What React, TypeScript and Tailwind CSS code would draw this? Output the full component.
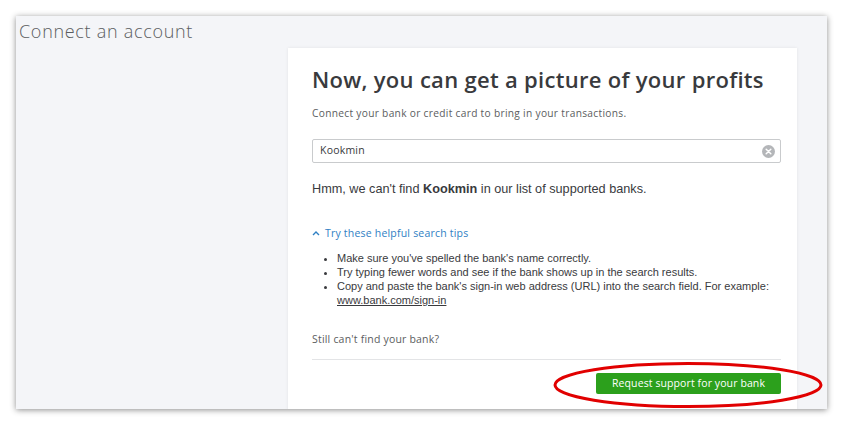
import React from 'react';

const tips = [
  "Make sure you've spelled the bank's name correctly.",
  'Try typing fewer words and see if the bank shows up in the search results.',
];

export default function App() {
  return (
    <div className="w-[842px] h-[426px] bg-white overflow-hidden pt-[16px] pl-[16px]">
      <div className="relative w-[811px] h-[393px] bg-[#f4f5f8] overflow-hidden shadow-[0_1px_6px_rgba(0,0,0,0.45)]">
        <div className="pl-[3px] pt-[3px] text-[18px] leading-[24px] text-[#5b5d60] font-['Open_Sans',sans-serif] font-light tracking-[0.7px]">
          Connect an account
        </div>

        <div className="ml-[272px] mt-[5px] w-[509px] h-[400px] bg-white shadow-[0_0_3px_rgba(0,0,0,0.08)] pl-[24px] pr-[16px] pt-[16px]">
          <h1 className="text-[22px] leading-[30px] font-semibold text-[#393a3d] font-['Open_Sans',sans-serif] tracking-[0.3px]">
            Now, you can get a picture of your profits
          </h1>
          <p className="mt-[12px] text-[10.2px] leading-[14px] text-[#5b5d60] font-['Open_Sans',sans-serif] tracking-[0.3px]">
            Connect your bank or credit card to bring in your transactions.
          </p>

          <div className="mt-[19px] h-[24px] border border-[#c9cbcd] rounded-[2px] flex items-center justify-between pl-[7px] pr-[5px]">
            <span className="text-[10.5px] text-[#393a3d] font-['Open_Sans',sans-serif] tracking-[0.2px]">Kookmin</span>
            <svg width="13" height="13" viewBox="0 0 14 14">
              <circle cx="7" cy="7" r="7" fill="#b4b6b9" />
              <path d="M4.5 4.5 L9.5 9.5 M9.5 4.5 L4.5 9.5" stroke="white" strokeWidth="1.6" strokeLinecap="round" />
            </svg>
          </div>

          <p className="mt-[18px] text-[12.7px] leading-[16px] text-[#393a3d] font-['Liberation_Sans',sans-serif]">
            Hmm, we can't find <b>Kookmin</b> in our list of supported banks.
          </p>

          <div className="mt-[29px] flex items-center gap-[5px] text-[10.5px] leading-[14px] text-[#2f80c4] font-['Open_Sans',sans-serif] tracking-[0.2px]">
            <svg width="8" height="6" viewBox="0 0 8 6">
              <path d="M1 5 L4 2 L7 5" fill="none" stroke="#2f80c4" strokeWidth="1.4" />
            </svg>
            Try these helpful search tips
          </div>

          <ul className="mt-[11px] pl-[25px] list-disc text-[11px] leading-[14px] text-[#393a3d] font-['Liberation_Sans',sans-serif]">
            {tips.map((t) => (
              <li key={t}>{t}</li>
            ))}
            <li>
              Copy and paste the bank's sign-in web address (URL) into the search field. For example:{' '}
              <span className="underline">www.bank.com/sign-in</span>
            </li>
          </ul>

          <p className="mt-[25px] text-[10.5px] leading-[14px] text-[#5b5d60] font-['Open_Sans',sans-serif] tracking-[0.2px]">
            Still can't find your bank?
          </p>

          <div className="mt-[13px] border-t border-[#e3e4e6]" />

          <div className="mt-[13px] flex justify-end">
            <button className="w-[185px] h-[21px] rounded-[2px] bg-[#2ca01c] text-white text-[10.5px] font-medium font-['Open_Sans',sans-serif] tracking-[0.1px]">
              Request support for your bank
            </button>
          </div>
        </div>

        <svg className="absolute left-[536px] top-[345px]" width="272" height="48" viewBox="0 0 272 48">
          <ellipse cx="136" cy="24" rx="133" ry="21.5" fill="none" stroke="#e10000" strokeWidth="3" />
        </svg>
      </div>
    </div>
  );
}
